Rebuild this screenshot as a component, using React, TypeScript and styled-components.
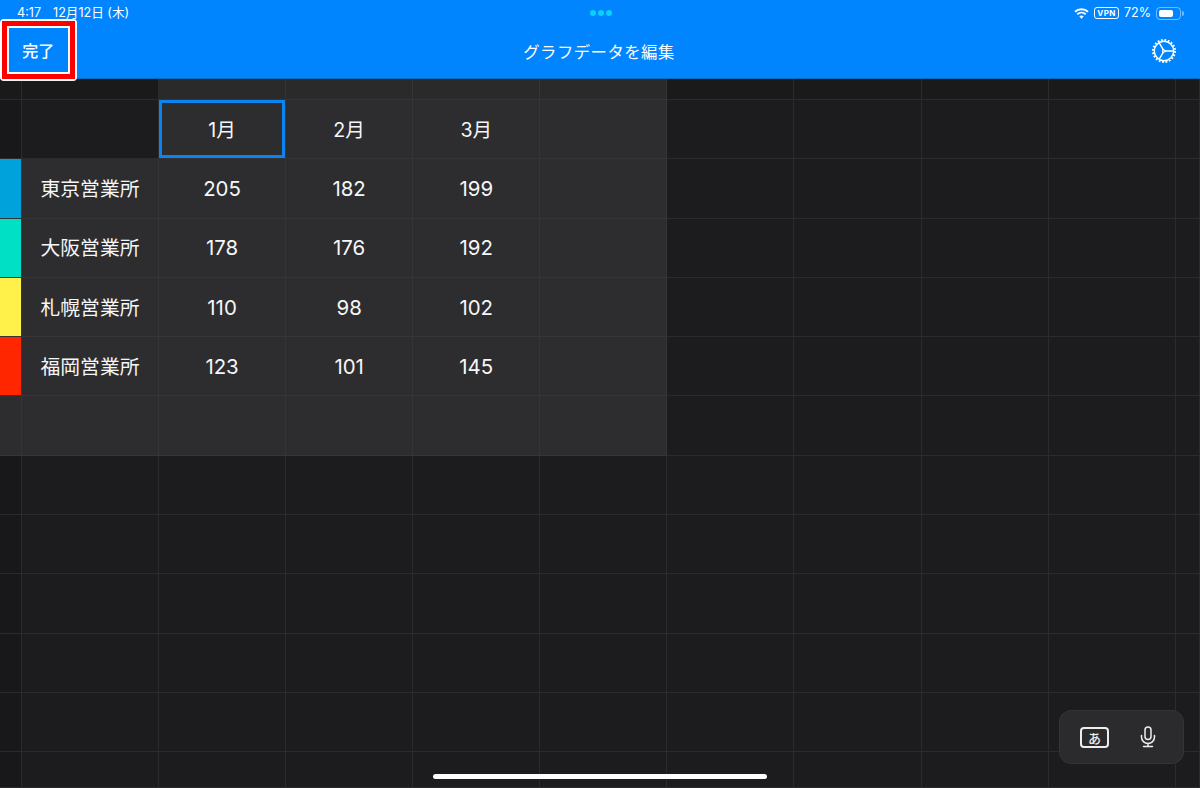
import React from "react";
import styled, { createGlobalStyle } from "styled-components";

const Global = createGlobalStyle`
  html, body { margin: 0; padding: 0; background: #1c1c1e; }
  * { box-sizing: border-box; }
`;

const FONT = `Inter, "Noto Sans CJK JP", "Liberation Sans", sans-serif`;

const Page = styled.div`
  position: relative;
  width: 1200px;
  height: 788px;
  overflow: hidden;
  display: flex;
  flex-direction: column;
  background: #1c1c1e;
  color: #fff;
  font-family: ${FONT};
`;

const Header = styled.header`
  flex: none;
  height: 79px;
  background: #0085ff;
  border-bottom: 1px solid #0a6bc4;
  display: flex;
  flex-direction: column;
`;

const StatusBar = styled.div`
  height: 26px;
  padding: 0 16px 0 17px;
  display: grid;
  grid-template-columns: 1fr auto 1fr;
  align-items: center;
  font-size: 12.6px;
  line-height: 26px;
`;

const StatusLeft = styled.div`
  display: flex;
  gap: 12px;
`;

const Dots = styled.div`
  display: flex;
  gap: 2px;
`;

const Dot = styled.span`
  width: 6px;
  height: 6px;
  border-radius: 50%;
  background: #0ad0ff;
`;

const StatusRight = styled.div`
  display: flex;
  align-items: center;
  justify-content: flex-end;
  gap: 5px;
`;

const VpnBadge = styled.span`
  width: 25px;
  height: 12px;
  border: 1px solid #fff;
  border-radius: 3px;
  font-size: 8px;
  font-weight: 700;
  line-height: 10px;
  text-align: center;
  letter-spacing: 0.4px;
`;

const Percent = styled.span`
  font-size: 12.5px;
`;

const Battery = styled.span`
  width: 25px;
  height: 13px;
  padding: 2px;
  border: 1px solid rgba(255, 255, 255, 0.45);
  border-radius: 4px;
  display: block;
`;

const BatteryFill = styled.span`
  display: block;
  width: 72%;
  height: 100%;
  background: #fff;
  border-radius: 2px;
`;

const BatteryCap = styled.span`
  width: 2px;
  height: 5px;
  margin-left: -4px;
  border-radius: 0 2px 2px 0;
  background: rgba(255, 255, 255, 0.45);
`;

const NavBar = styled.div`
  flex: 1;
  display: grid;
  grid-template-columns: 1fr auto 1fr;
  align-items: center;
  padding: 0 23px 0 21px;
  margin-top: -2px;
`;

const NavSpacer = styled.span`
  justify-self: start;
`;

const Title = styled.h1`
  margin: 0;
  font-size: 16.4px;
  font-weight: 400;
  letter-spacing: 0.45px;
`;

const GearWrap = styled.span`
  justify-self: end;
  display: flex;
`;

const Sheet = styled.main`
  flex: 1;
  display: grid;
  grid-template-columns: 22px 137px repeat(8, 127.1px) 1fr;
  grid-template-rows: 21px repeat(11, 59.3px) 1fr;
`;

type Tone = "gutter" | "dark" | "top" | "light" | "darkTop";

const toneBg: Record<Tone, string> = {
  gutter: "#18181a",
  dark: "#1c1c1e",
  top: "#2a2a2a",
  light: "#2d2d2f",
  darkTop: "#1a1a1a",
};

const Cell = styled.div<{ $tone: Tone; $color?: string }>`
  display: flex;
  align-items: center;
  justify-content: center;
  font-size: 19.6px;
  color: #f6f6f7;
  border-right: 1px solid ${(p) => (p.$tone === "light" || p.$tone === "top" ? "#353537" : "#2b2b2d")};
  border-bottom: 1px solid ${(p) => (p.$tone === "light" || p.$tone === "top" ? "#353537" : "#2b2b2d")};
  background: ${(p) => p.$color ?? toneBg[p.$tone]};
`;

const CellText = styled.span`
  padding-bottom: 2px;
`;

const RowLabel = styled(CellText)`
  font-size: 19.8px;
`;

const Num = styled.span`
  font-size: 20.4px;
`;

const SelectedFrame = styled.span`
  align-self: stretch;
  flex: 1;
  border: 3px solid #0a84f0;
  display: flex;
  align-items: center;
  justify-content: center;
`;

const Annotation = styled.div`
  position: absolute;
  left: 0;
  top: 19px;
  width: 76.5px;
  height: 62px;
  border-radius: 4px;
  border: 2.5px solid #fff;
  background: #fff;
`;

const AnnotationRed = styled.div`
  width: 100%;
  height: 100%;
  border: 5.5px solid #ff0000;
  display: flex;
`;

const AnnotationInner = styled.div`
  flex: 1;
  border: 2px solid #fff;
  background: #0085ff;
  display: flex;
  align-items: center;
  justify-content: center;
  font-size: 16px;
  font-weight: 500;
`;

const InputPill = styled.div`
  position: absolute;
  left: 1059px;
  top: 710px;
  width: 125px;
  height: 54px;
  border-radius: 12px;
  border: 1px solid #343436;
  background: #2b2b2d;
  display: flex;
  align-items: center;
  justify-content: space-between;
  padding: 0 27px 0 20px;
`;

const KanaKey = styled.span`
  width: 29px;
  height: 21px;
  border: 2px solid #ededed;
  border-radius: 4px;
  display: flex;
  align-items: center;
  justify-content: center;
  font-size: 13px;
  font-weight: 500;
  color: #ededed;
`;

const HomeBar = styled.div`
  position: absolute;
  left: 433px;
  top: 774px;
  width: 334px;
  height: 5px;
  border-radius: 3px;
  background: #fff;
`;

const COLS = 11;
const months = ["1月", "2月", "3月"];
const rows = [
  { name: "東京営業所", color: "#00a2dc", vals: [205, 182, 199] },
  { name: "大阪営業所", color: "#00e0c4", vals: [178, 176, 192] },
  { name: "札幌営業所", color: "#fff04a", vals: [110, 98, 102] },
  { name: "福岡営業所", color: "#ff2600", vals: [123, 101, 145] },
];

const Wifi = () => (
  <svg width="15" height="11" viewBox="0 0 15 11" fill="none" stroke="#fff" strokeLinecap="butt">
    <path d="M1 3.8C4.6.4 10.4.4 14 3.8" strokeWidth="1.9" />
    <path d="M3.3 6.2c2.4-2.1 6-2.1 8.4 0" strokeWidth="1.9" />
    <path d="M7.5 10.6 5.6 8.4c1.1-.9 2.7-.9 3.8 0z" fill="#fff" strokeWidth="0.4" />
  </svg>
);

const Gear = () => (
  <svg width="26" height="26" viewBox="0 0 26 26" fill="none" stroke="#fff">
    <circle cx="13" cy="13" r="9.7" strokeWidth="1.4" />
    <circle cx="13" cy="13" r="11" strokeWidth="2" strokeDasharray="1.8 1.66" />
    <path d="M14.8 13H22.5M12.1 14.6 8.2 21.2M12.1 11.4 8.2 4.8" strokeWidth="1.4" />
    <path d="M11.7 11.2 15 13 11.7 14.8z" strokeWidth="1.2" strokeLinejoin="round" />
  </svg>
);

const Mic = () => (
  <svg width="16" height="22" viewBox="0 0 16 22" fill="none" stroke="#ededed" strokeWidth="1.5" strokeLinecap="round">
    <rect x="5" y="1" width="6" height="12.5" rx="3" />
    <path d="M1.5 9.5v1.5a6.5 6.5 0 0 0 13 0V9.5M8 17.5V20M3.5 20.5h9" />
  </svg>
);

export default function App() {
  const cells: React.ReactNode[] = [];
  const tail = (r: number, from: number, tone: (c: number) => Tone) => {
    for (let c = from; c < COLS; c++) cells.push(<Cell key={`${r}-${c}`} $tone={tone(c)} />);
  };

  tail(0, 0, (c) => (c < 2 ? "darkTop" : c < 6 ? "top" : "darkTop"));

  cells.push(<Cell key="h0" $tone="gutter" />, <Cell key="h1" $tone="dark" />);
  months.forEach((m, i) =>
    cells.push(
      <Cell key={m} $tone="light">
        {i === 0 ? (
          <SelectedFrame>
            <CellText>{m}</CellText>
          </SelectedFrame>
        ) : (
          <CellText>{m}</CellText>
        )}
      </Cell>
    )
  );
  tail(1, 5, (c) => (c < 6 ? "light" : "dark"));

  rows.forEach((row, r) => {
    cells.push(<Cell key={`${r}c`} $tone="light" $color={row.color} />);
    cells.push(
      <Cell key={`${r}n`} $tone="light">
        <RowLabel>{row.name}</RowLabel>
      </Cell>
    );
    row.vals.forEach((v, i) =>
      cells.push(
        <Cell key={`${r}v${i}`} $tone="light">
          <Num>{v}</Num>
        </Cell>
      )
    );
    tail(r + 2, 5, (c) => (c < 6 ? "light" : "dark"));
  });

  tail(6, 0, (c) => (c < 6 ? "light" : "dark"));
  for (let r = 7; r < 13; r++) tail(r, 0, (c) => (c === 0 ? "gutter" : "dark"));

  return (
    <Page>
      <Global />
      <Header>
        <StatusBar>
          <StatusLeft>
            <span>4:17</span>
            <span>12月12日 (木)</span>
          </StatusLeft>
          <Dots>
            <Dot />
            <Dot />
            <Dot />
          </Dots>
          <StatusRight>
            <Wifi />
            <VpnBadge>VPN</VpnBadge>
            <Percent>72%</Percent>
            <Battery>
              <BatteryFill />
            </Battery>
            <BatteryCap />
          </StatusRight>
        </StatusBar>
        <NavBar>
          <NavSpacer />
          <Title>グラフデータを編集</Title>
          <GearWrap>
            <Gear />
          </GearWrap>
        </NavBar>
      </Header>
      <Sheet>{cells}</Sheet>
      <Annotation>
        <AnnotationRed>
          <AnnotationInner>完了</AnnotationInner>
        </AnnotationRed>
      </Annotation>
      <InputPill>
        <KanaKey>あ</KanaKey>
        <Mic />
      </InputPill>
      <HomeBar />
    </Page>
  );
}
